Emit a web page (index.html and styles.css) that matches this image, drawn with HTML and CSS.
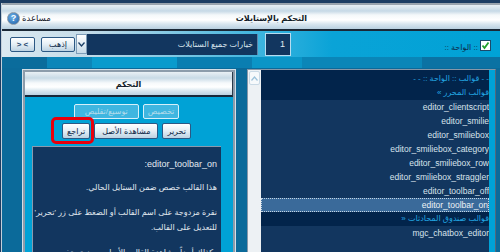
FILE: index.html
```html
<!DOCTYPE html>
<html>
<head>
    <title>التحكم بالإستايلات</title>
    <link rel="stylesheet" href="styles.css">
</head>
<body>
    <div class="frame">
        <div class="titlebar">
            <div class="help">
                <span class="help-icon">?</span>
                <span class="help-text">مساعدة</span>
            </div>
            <div class="title">التحكم بالإستايلات</div>
        </div>

        <div class="toolbar">
            <button class="btn nav-btn">&gt; &lt;</button>
            <button class="btn go-btn">إذهب</button>
            <span class="drop-arrow">
                <svg width="7" height="5" viewBox="0 0 7 5"><polyline points="0.5,0.5 3.5,4 6.5,0.5" fill="none" stroke="#1b3f66" stroke-width="1.3"/></svg>
            </span>
            <div class="style-select">خيارات جميع الستايلات</div>
            <div class="page-box">1</div>
            <label class="check-label">
                <span class="check-text">:: الواحة ::</span>
                <span class="checkbox">
                    <svg width="9" height="9" viewBox="0 0 9 9"><polyline points="1.5,4.5 3.5,7 7.5,1.5" fill="none" stroke="#21a02a" stroke-width="1.8"/></svg>
                </span>
            </label>
        </div>

        <div class="band"></div>

        <div class="main">
            <div class="panel">
                <div class="panel-inner">
                    <div class="panel-head">التحكم</div>
                    <div class="panel-body">
                        <div class="btn-row">
                            <button class="btn disabled btn-wide">توسيع/تقليص</button>
                            <button class="btn disabled">تخصيص</button>
                        </div>
                        <div class="btn-row">
                            <span class="revert-wrap">
                                <button class="btn">تراجع</button>
                                <span class="highlight"></span>
                            </span>
                            <button class="btn btn-mid">مشاهدة الأصل</button>
                            <button class="btn">تحرير</button>
                        </div>
                        <div class="info">
                            <p class="info-title">editor_toolbar_on:</p>
                            <p>هذا القالب خصص ضمن الستايل الحالي.</p>
                            <p class="nowrap">نقرة مزدوجة على اسم القالب أو الضغط على زر 'تحرير'<br>للتعديل على القالب.</p>
                            <p>وكذلك أيضاً مشاهدة القالب الأصلي حيث تم تخصيص هذا القالب في الستايل الحالي.</p>
                        </div>
                    </div>
                </div>
            </div>

            <div class="list-panel">
                <div class="scrollbar">
                    <span class="scroll-up">
                        <svg width="7" height="5" viewBox="0 0 7 5"><polyline points="0.5,4.5 3.5,1 6.5,4.5" fill="none" stroke="#9cc2da" stroke-width="1.2"/></svg>
                    </span>
                </div>
                <div class="list">
                    <div class="row group">- - قوالب :: الواحة :: - -</div>
                    <div class="row group">قوالب المحرر »</div>
                    <div class="row">editor_clientscript</div>
                    <div class="row">editor_smilie</div>
                    <div class="row">editor_smiliebox</div>
                    <div class="row">editor_smiliebox_category</div>
                    <div class="row">editor_smiliebox_row</div>
                    <div class="row">editor_smiliebox_straggler</div>
                    <div class="row">editor_toolbar_off</div>
                    <div class="row selected">editor_toolbar_on</div>
                    <div class="row group">قوالب صندوق المحادثات «</div>
                    <div class="row">mgc_chatbox_editor</div>
                </div>
            </div>
        </div>
    </div>
</body>
</html>
```

FILE: styles.css
```css
body {
    margin: 0;
    width: 500px;
    height: 252px;
    overflow: hidden;
    background-color: #1d3d63;
    font-family: "Liberation Sans", "DejaVu Sans", sans-serif;
    font-size: 8px;
}

.frame {
    margin-top: 3px;
    margin-left: 1px;
    border-left: 1px solid #c4d0da;
}

/* top title bar */
.titlebar {
    display: flex;
    align-items: center;
    height: 22px;
    padding-top: 4px;
    border-bottom: 2px solid #1b2836;
    background: linear-gradient(#9aa4ae 0, #9aa4ae 2px, #e8eff4 2px, #c6d9e6 8px, #f4f8fa 12px, #ffffff 17px, #d8e6ef 21px, #b9d0e0 26px);
}

.help {
    display: flex;
    align-items: center;
    padding-left: 5px;
}

.help-icon {
    width: 11px;
    height: 11px;
    border-radius: 50%;
    border: 1px solid #8a98a6;
    background: radial-gradient(circle at 40% 35%, #6db2ea, #1d5ea6);
    color: #fff;
    font-weight: bold;
    font-size: 9px;
    line-height: 11px;
    text-align: center;
}

.help-text {
    margin-left: 2px;
    color: #15202c;
    font-size: 8.5px;
}

.title {
    flex: 1;
    text-align: center;
    padding-right: 8px;
    font-weight: bold;
    color: #101a26;
}

/* second row with the selector */
.toolbar {
    display: flex;
    align-items: center;
    height: 26px;
    background: linear-gradient(to right, #dbe9f1 0, #c4dbe8 85px, #39b3de 262px, #0aa3d7 330px, #00a2d6 100%);
}

.btn {
    height: 16px;
    padding: 0 4px;
    border: 1px solid #2c5884;
    border-radius: 2px;
    background: linear-gradient(#ffffff, #e4eef5 50%, #bcd2e2);
    color: #0b2444;
    font-family: "Liberation Sans", "DejaVu Sans", sans-serif;
    font-size: 8px;
    line-height: 13px;
}

.btn-mid {
    padding: 0 7px;
}

.btn-wide {
    padding: 0 10px;
}

.nav-btn {
    width: 25px;
    height: 15px;
    margin-left: 8px;
    padding: 0;
    font-weight: bold;
    color: #1f4670;
}

.go-btn {
    width: 34px;
    height: 15px;
    margin-left: 6px;
    padding: 0;
}

.drop-arrow {
    display: flex;
    align-items: center;
    justify-content: center;
    width: 9px;
    height: 18px;
    margin-left: 1px;
    border: 1px solid #7f9db8;
    background: linear-gradient(#ffffff, #c8dbe8);
}

.style-select {
    width: 166px;
    height: 21px;
    padding-right: 4px;
    border-right: 1px solid #5f86aa;
    background-color: #12365f;
    color: #dbe6ef;
    direction: rtl;
    line-height: 21px;
}

.page-box {
    width: 19px;
    height: 21px;
    margin-left: 7px;
    padding-right: 5px;
    border: 1px solid #b6dcf0;
    background-color: #12365f;
    color: #e2ebf2;
    font-size: 9px;
    text-align: right;
    line-height: 21px;
}

.check-label {
    display: flex;
    align-items: center;
    margin-left: auto;
    margin-right: 9px;
    margin-top: 3px;
}

.check-text {
    color: #0c2a4a;
    direction: rtl;
    margin-top: 4px;
}

.checkbox {
    display: flex;
    align-items: center;
    justify-content: center;
    width: 9px;
    height: 9px;
    margin-left: 2px;
    border: 1px solid #1c4a6a;
    background-color: #fff;
}

.band {
    height: 11px;
    background: linear-gradient(to right, #0b6c9c 0, #0b6c9c 45px, #0c86b9 45px, #0c86b9 90px, #0a9bcd 90px, #0a9bcd 175px, #0a7eb1 175px, #0a7eb1 250px, #0a95c7 250px, #0a95c7 300px, #0a86b8 300px, #0a86b8 420px, #0b72a3 420px);
}

/* main area */
.main {
    display: flex;
    height: 184px;
    padding-top: 1px;
    background-color: #0b6a9a;
}

.panel {
    width: 212px;
    margin-left: 20px;
    border: 1px solid #d4dee6;
}

.panel-inner {
    height: 100%;
    border: 2px solid #8c9cab;
    border-bottom: none;
    background-color: #00a2d6;
}

.panel-head {
    height: 23px;
    border-bottom: 2px solid #17283a;
    border-right: 1px solid #2a3a4a;
    background: linear-gradient(#e9f0f5 0, #c8dae6 6px, #f6f9fb 11px, #ffffff 15px, #d6e5ee 19px, #bcd2e1 23px);
    text-align: center;
    line-height: 25px;
    font-weight: bold;
    color: #101a26;
}

.panel-body {
    padding: 7px 12px 0 7px;
}

.btn-row {
    display: flex;
    justify-content: center;
    gap: 4px;
    margin-bottom: 4px;
}

.btn.disabled {
    height: 15px;
    border: 1px solid #d6f0fa;
    background-color: #3fb6e0;
    background-image: none;
    color: #b4dbea;
}

.revert-wrap {
    position: relative;
    display: flex;
}

.highlight {
    position: absolute;
    left: -11px;
    right: -4px;
    top: -6px;
    bottom: -5px;
    border: 3px solid #e8000c;
    border-radius: 5px;
}

.info {
    height: 120px;
    margin-top: 7px;
    padding: 6px 4px 0 8px;
    border-top: 1px solid #8a9aae;
    border-left: 1px solid #8a9aae;
    background-color: #12365f;
    color: #e2eaf1;
    direction: rtl;
    line-height: 15px;
}

.info p {
    margin: 0 0 10px 0;
}

.info .nowrap {
    white-space: nowrap;
}

.info .info-title {
    font-size: 9px;
    line-height: 19px;
    padding-top: 2px;
    margin-bottom: 6px;
}

/* template list */
.list-panel {
    display: flex;
    width: 241px;
    margin-left: 11px;
    padding-right: 6px;
    border-left: 1px solid #8797a8;
    border-top: 1px solid #8797a8;
    border-right: 1px solid #55677a;
    background-color: #00a2d6;
}

.scrollbar {
    width: 13px;
    background-color: #edf1f4;
}

.scroll-up {
    display: flex;
    align-items: center;
    justify-content: center;
    width: 9px;
    height: 12px;
    margin: 1px 0 0 1px;
    border: 1px solid #c9d9e5;
    border-radius: 2px;
    background-color: #f6f9fb;
}

.list {
    width: 228px;
    overflow: hidden;
    border-top: 2px solid #02244b;
    background-color: #12365f;
}

.row {
    height: 14px;
    line-height: 14px;
    text-align: right;
    white-space: nowrap;
    color: #d8e3ec;
    font-size: 8.5px;
}

.row.group {
    background-color: #02244b;
    color: #22a6e2;
    direction: rtl;
    font-size: 8px;
}

.row.selected {
    height: 12px;
    line-height: 12px;
    border: 1px dotted #c4d4e2;
    background-color: #3a6a9a;
    color: #eef3f7;
}
```
